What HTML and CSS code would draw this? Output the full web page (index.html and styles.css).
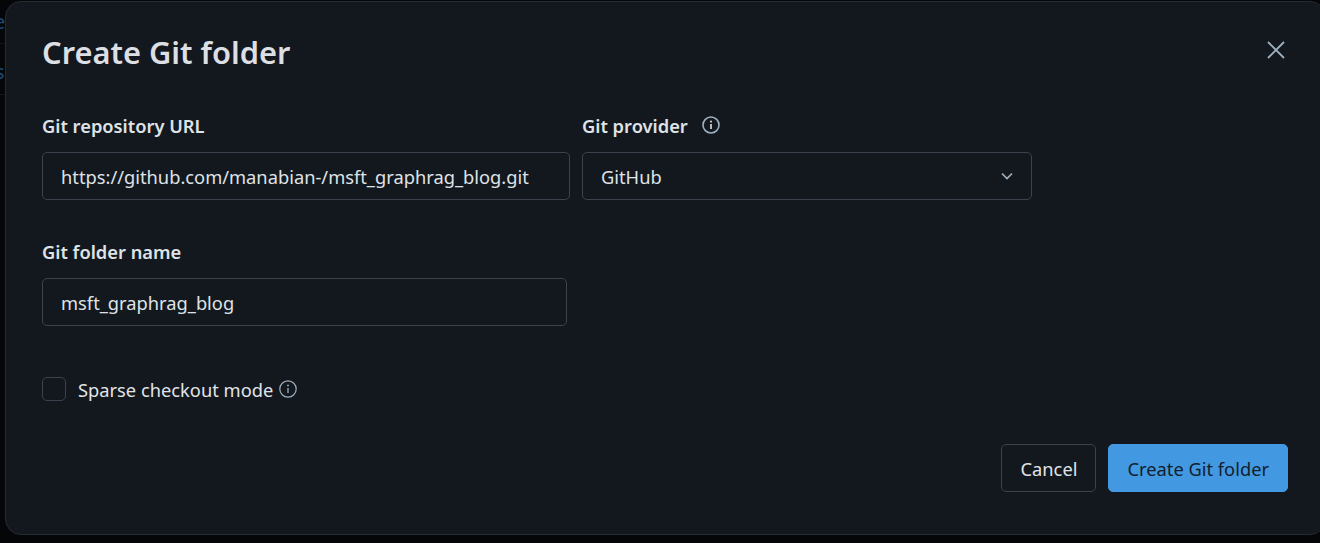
FILE: index.html
```html
<!DOCTYPE html>
<html lang="en">
<head>
  <meta charset="UTF-8" />
  <title>Create Git folder</title>
  <link rel="stylesheet" href="styles.css">
</head>
<body>

<div class="page">
  <div class="behind">
    <span class="behind-a">e</span>
    <span class="behind-b">s</span>
  </div>

  <div class="modal">
    <div class="modal-head">
      <h1>Create Git folder</h1>
      <button class="close" aria-label="Close">
        <svg width="20" height="20" viewBox="0 0 20 20"><path d="M2 2 L18 18 M18 2 L2 18" fill="none" stroke="#9fb0c0" stroke-width="1.8"/></svg>
      </button>
    </div>

    <div class="row row-first">
      <div class="field field-url">
        <label>Git repository URL</label>
        <div class="input">https://github.com/manabian-/msft_graphrag_blog.git</div>
      </div>
      <div class="field field-provider">
        <label>Git provider
          <svg class="info info-label" width="18" height="18" viewBox="0 0 18 18"><circle cx="9" cy="9" r="8" fill="none" stroke="#9fb0c0" stroke-width="1.6"/><path d="M9 8 V13" stroke="#c5d0da" stroke-width="1.8"/><circle cx="9" cy="5.6" r="1.1" fill="#c5d0da"/></svg>
        </label>
        <div class="input select">
          <span>GitHub</span>
          <svg width="14" height="14" viewBox="0 0 14 14"><path d="M2 4.5 L7 9.5 L12 4.5" fill="none" stroke="#9fb0c0" stroke-width="1.7"/></svg>
        </div>
      </div>
    </div>

    <div class="row">
      <div class="field field-name">
        <label>Git folder name</label>
        <div class="input">msft_graphrag_blog</div>
      </div>
    </div>

    <div class="check-row">
      <span class="checkbox"></span>
      <span class="check-label">Sparse checkout mode</span>
      <svg class="info" width="18" height="18" viewBox="0 0 18 18"><circle cx="9" cy="9" r="8.2" fill="none" stroke="#9fb0c0" stroke-width="1.2"/><path d="M9 8 V13" stroke="#9fb0c0" stroke-width="1.3"/><circle cx="9" cy="5.5" r="0.9" fill="#9fb0c0"/></svg>
    </div>

    <div class="actions">
      <button class="btn btn-cancel">Cancel</button>
      <button class="btn btn-primary">Create Git folder</button>
    </div>
  </div>
</div>

</body>
</html>
```

FILE: styles.css
```css
html, body {
  margin: 0;
  height: 543px;
  overflow: hidden;
  background-color: #050607;
}
.page {
  display: flex;
  height: 543px;
  font-family: "Noto Sans", Arial, sans-serif;
  font-size: 18.3px;
  color: #e0e4e8;
}
.behind {
  width: 5px;
  flex: none;
  overflow: hidden;
  color: #1a4a75;
  font-size: 20px;
  line-height: 20px;
}
.behind-a,
.behind-b {
  display: block;
  box-sizing: border-box;
  border-bottom: 1px solid #11161b;
}
.behind-a {
  height: 44px;
  padding-top: 12px;
  margin-left: -6px;
}
.behind-b {
  height: 51px;
  padding-top: 18px;
  margin-left: -5px;
}
.modal {
  width: 1321px;
  height: 534px;
  margin-top: 1px;
  box-sizing: border-box;
  padding: 0 37px 0 36px;
  background-color: #13181e;
  border: 1px solid #252b32;
  border-radius: 16px;
  flex: none;
}
.modal-head {
  display: flex;
  justify-content: space-between;
  align-items: flex-start;
  height: 111px;
}
h1 {
  margin: 30px 0 0;
  font-size: 30.8px;
  line-height: 41px;
  font-weight: 600;
  color: #dcdfe3;
}
.close {
  background: none;
  border: none;
  padding: 0;
  margin: 38px 2px 0 0;
  height: 20px;
  display: flex;
}
.row {
  display: flex;
  gap: 12px;
}
.row-first {
  height: 126px;
}
.field label {
  display: flex;
  align-items: center;
  height: 24px;
  margin-bottom: 15px;
  font-weight: 600;
  color: #dfe3e7;
}
.field-url { width: 528px; }
.field-provider { width: 450px; }
.field-name { width: 525px; }
.input {
  box-sizing: border-box;
  height: 48px;
  padding: 0 18px;
  display: flex;
  align-items: center;
  justify-content: space-between;
  white-space: nowrap;
  overflow: hidden;
  border: 1px solid #3a434e;
  border-radius: 5px;
  color: #dfe3e7;
}
.select svg {
  margin-right: -1px;
}
.info-label {
  margin-left: 14px;
}
.check-row {
  display: flex;
  align-items: center;
  margin-top: 51px;
  height: 24px;
}
.checkbox {
  box-sizing: border-box;
  width: 24px;
  height: 24px;
  border: 1px solid #3a434e;
  border-radius: 5px;
  margin-right: 12px;
}
.check-label {
  margin-right: 6px;
}
.actions {
  display: flex;
  justify-content: flex-end;
  gap: 12px;
  margin-top: 43px;
}
.btn {
  box-sizing: border-box;
  height: 48px;
  padding: 0 18px;
  font-family: inherit;
  font-size: 18.3px;
  color: #e0e4e8;
  background: none;
  border: 1px solid #3a434e;
  border-radius: 5px;
}
.btn-cancel {
  width: 95px;
  padding: 0;
}
.btn-primary {
  background-color: #4299e1;
  border-color: #4299e1;
  color: #12202e;
}
```
